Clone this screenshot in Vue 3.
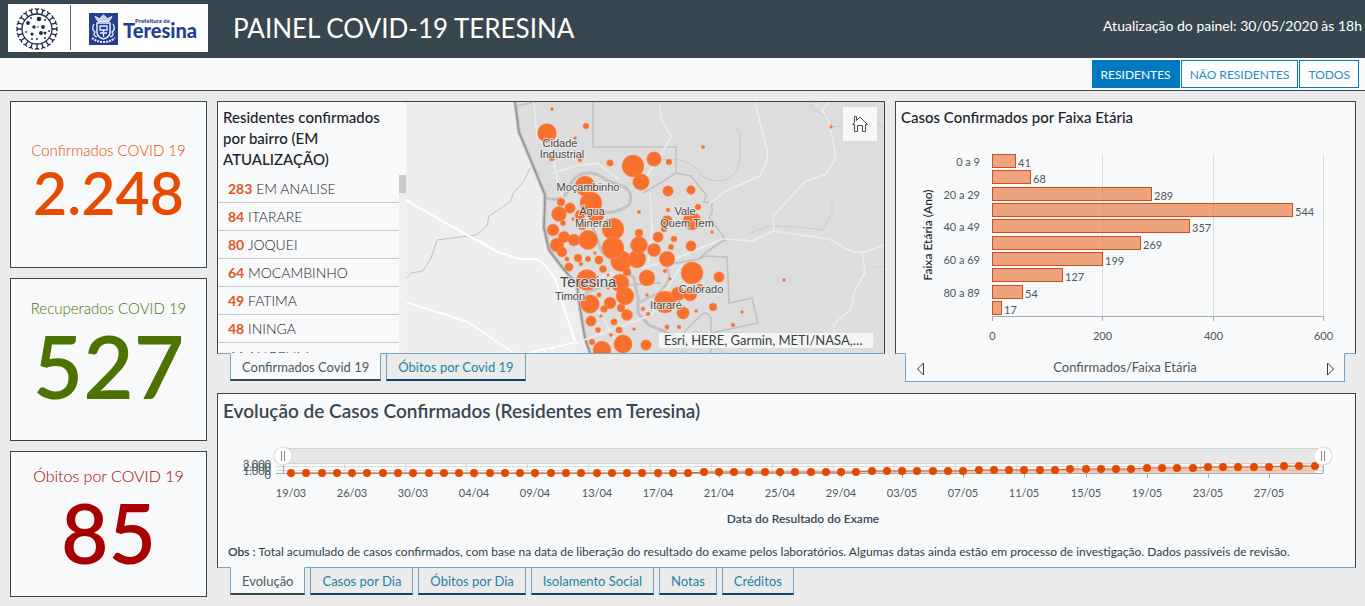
<script setup>
import { ref } from 'vue'

const filters = ['RESIDENTES', 'NÃO RESIDENTES', 'TODOS']
const activeFilter = ref('RESIDENTES')

const indicators = [
  { label: 'Confirmados COVID 19', value: '2.248', kind: 'confirmed' },
  { label: 'Recuperados COVID 19', value: '527', kind: 'recovered' },
  { label: 'Óbitos por COVID 19', value: '85', kind: 'deaths' },
]

const districts = [
  [283, 'EM ANALISE'],
  [84, 'ITARARE'],
  [80, 'JOQUEI'],
  [64, 'MOCAMBINHO'],
  [49, 'FATIMA'],
  [48, 'ININGA'],
  [46, 'ANGELIM'],
]

const mapTabs = ['Confirmados Covid 19', 'Óbitos por Covid 19']
const activeMapTab = ref(mapTabs[0])

const chartTabs = ['Evolução', 'Casos por Dia', 'Óbitos por Dia', 'Isolamento Social', 'Notas', 'Créditos']
const activeChartTab = ref(chartTabs[0])

// x, y, radius
const bubbles = [
  [552, 109, 1.5], [547, 133, 9.5], [586, 126, 3], [575, 138, 1.5], [552, 158, 3], [580, 160, 2],
  [610, 163, 3.3], [633, 166, 11], [641, 182, 8.3], [585, 186, 10], [596, 215, 8], [591, 203, 11],
  [561, 202, 4], [570, 208, 5.3], [559, 214, 7.5], [563, 223, 2.7], [573, 219, 1.5], [639, 212, 1.7],
  [580, 215, 5], [582, 226, 4], [553, 230, 6], [613, 229, 11], [654, 159, 7.3], [669, 162, 3],
  [703, 147, 1.8], [831, 127, 1.4], [668, 191, 5.3], [691, 190, 4.4], [668, 210, 2], [698, 207, 3],
  [667, 221, 5.5], [692, 221, 9], [664, 229, 3], [712, 232, 1.5], [557, 245, 7], [564, 237, 5.8],
  [574, 240, 6], [588, 240, 9.7], [562, 252, 5], [567, 259, 2.3], [578, 258, 4], [588, 259, 2.8],
  [581, 264, 2], [569, 267, 4.2], [599, 260, 4.2], [595, 253, 1.6], [603, 269, 3.6], [621, 261, 10.5],
  [613, 248, 11], [637, 259, 9], [639, 245, 8.5], [639, 233, 4], [587, 280, 10.5], [620, 283, 9],
  [627, 272, 4], [608, 275, 1.4], [608, 288, 1.4], [647, 278, 8], [625, 296, 9], [599, 295, 2.3],
  [590, 304, 9.3], [610, 303, 6], [604, 309, 3.5], [621, 308, 4], [627, 315, 5.6], [601, 316, 1.5],
  [591, 321, 5.2], [614, 322, 3.2], [598, 330, 2.7], [619, 330, 3.3], [611, 335, 1.8], [634, 329, 1.6],
  [592, 342, 2.9], [623, 344, 9.2], [602, 350, 9], [646, 345, 5.3], [643, 309, 2], [647, 295, 1.5],
  [648, 314, 2], [658, 237, 5.2], [674, 239, 3], [671, 247, 2.8], [654, 250, 6.6], [691, 246, 5.2],
  [667, 259, 7.8], [665, 271, 1.9], [670, 279, 1.4], [692, 273, 11], [719, 277, 5.3], [784, 280, 1.5],
  [700, 287, 3], [665, 302, 11], [678, 294, 7], [690, 294, 7], [683, 313, 6.2], [696, 311, 1.6],
  [713, 307, 3.9], [742, 312, 1.5], [733, 325, 2], [667, 327, 2.3], [679, 327, 2],
]

const places = [
  [560, 147, 'Cidade'], [562, 158, 'Industrial'], [588, 191, 'Moçambinho'], [592, 215, 'Água'],
  [593, 227, 'Mineral'], [685, 215, 'Vale'], [687, 227, 'Quem Tem'], [701, 293, 'Colorado'],
  [666, 309, 'Itararé'], [570, 300, 'Timon'],
]

const ages = [41, 68, 289, 544, 357, 269, 199, 127, 54, 17].map((value, i) => ({
  value,
  y: [154, 170, 187, 203, 219, 236, 252, 268, 285, 301][i],
  width: Math.round((value * 331) / 600),
  label: ['0 a 9', '', '20 a 29', '', '40 a 49', '', '60 a 69', '', '80 a 89', ''][i],
}))
const ageTicks = [0, 200, 400, 600].map((value) => ({ value, x: 992.5 + Math.round((value * 331) / 600) }))

// day index at which the curve climbs one more pixel
const climbs = [27, 38, 45, 51, 56, 60, 65]
const points = Array.from({ length: 68 }, (_, i) => ({
  x: Math.round(291 + i * 15.28),
  y: 473 - climbs.filter((c) => i >= c).length,
}))
const curve = points.map((p) => `${p.x},${p.y}`).join(' ')
const dates = [
  '19/03', '26/03', '30/03', '04/04', '09/04', '13/04', '17/04', '21/04', '25/04',
  '29/04', '03/05', '07/05', '11/05', '15/05', '19/05', '23/05', '27/05',
].map((label, i) => ({ label, x: Math.round(291 + i * 61.12) }))

const spikes = Array.from({ length: 20 }, (_, i) => i * 18)
</script>

<template>
  <div class="page">
    <header class="header">
      <svg class="logo" viewBox="0 0 200 48" role="img" aria-label="Prefeitura de Teresina">
        <rect width="200" height="48" fill="#fff" />
        <g transform="translate(29 25)" stroke="#1d2947" fill="none">
          <circle r="15" stroke-width="1.3" />
          <g v-for="a in spikes" :key="a" :transform="`rotate(${a})`">
            <path d="M0-15V-20M-2-20.5Q0-18.5 2-20.5" stroke-width="1.3" />
          </g>
          <g fill="#1d2947" stroke="none">
            <circle cx="2" cy="-10" r="2.3" /><circle cx="-9" cy="-6" r="1.9" /><circle cx="-3" cy="-2" r="1.7" />
            <circle cx="6" cy="-2" r="1.9" /><circle cx="4" cy="4" r="2" /><circle cx="-5" cy="5" r="1.6" />
            <circle cx="8" cy="4" r="1.5" /><circle cx="-6" cy="-11" r=".9" /><circle cx="8" cy="-9" r="1" />
            <circle cx="0" cy="10" r="1" /><circle cx="-5" cy="10" r=".9" /><circle cx="12" cy="2" r=".9" />
            <circle cx="-11" cy="3" r=".9" /><circle cx="8" cy="9" r="1" /><circle cx="1" cy="-2" r=".8" />
          </g>
        </g>
        <path d="M62.5 1V46" stroke="#5a6488" />
        <rect x="81" y="9" width="29" height="32" fill="#243f8f" />
        <g fill="none" stroke="#e9edf7">
          <path d="M87 12.500l3 5h11l3-5-4.500 2-4-3.500-4 3.500z" fill="#c4cde6" />
          <path d="M89 19h13v9q0 5-6.500 7Q89 33 89 28z" stroke-width="1.500" />
          <path d="M92 22h7v4h-7zM95.500 26v7M92 29h7M86 20q-3 5 1 8-3 3 2 5M105 20q3 5-1 8 3 3-2 5" stroke-width="1.300" />
          <path d="M84 34q5 4 11.500 4T107 34" stroke-width="2" stroke-dasharray="2 1" />
        </g>
        <text x="127" y="19" class="logo-small">Prefeitura de</text>
        <text x="115" y="34" class="logo-name">Teresina</text>
      </svg>
      <h1>PAINEL COVID-19 TERESINA</h1>
      <p class="updated">Atualização do painel: 30/05/2020 às 18h</p>
    </header>

    <nav class="filters" aria-label="Filtro de residência">
      <button
        v-for="f in filters"
        :key="f"
        type="button"
        :class="{ active: f === activeFilter }"
        :aria-pressed="f === activeFilter"
        @click="activeFilter = f"
      >{{ f }}</button>
    </nav>

    <main class="dashboard">
      <aside class="indicators">
        <section v-for="n in indicators" :key="n.kind" class="indicator" :class="n.kind">
          <h2>{{ n.label }}</h2>
          <p>{{ n.value }}</p>
        </section>
      </aside>

      <div class="content">
        <div class="top-row">
          <section class="block map-block">
            <div class="panel map-panel">
              <div class="districts">
                <h2>Residentes confirmados por bairro (EM ATUALIZAÇÃO)</h2>
                <div class="scroller">
                  <ul>
                    <li v-for="[count, name] in districts" :key="name"><strong>{{ count }}</strong> {{ name }}</li>
                  </ul>
                  <div class="track"><div class="thumb"></div></div>
                </div>
              </div>
              <div class="map">
                <svg class="map-canvas" viewBox="406 102 478 251" preserveAspectRatio="xMidYMid slice" role="img" aria-label="Mapa de casos confirmados por bairro">
                  <rect x="406" y="102" width="478" height="251" fill="#eeeeee" />
                  <path d="M515 102L519 132 532 163 545 195 544 228 549 250 562 267 577 285 580 308 585 338 590 353H884V102z" fill="#dddddd" />
                  <path d="M515 102L519 132 532 163 545 195 544 228 549 250 562 267 577 285 580 308 585 338 590 353" fill="none" stroke="#c8c8c8" stroke-width="4" />
                  <path d="M515 102L519 132 532 163 545 195 544 228 549 250 562 267 577 285 580 308 585 338 590 353" fill="none" stroke="#929292" stroke-width="1.500" />
                  <g fill="none" stroke="#c2c2c2">
                    <path d="M516 106L536 102M593 102V147H676V174M676 173L662 182 650 189 643 193M676 173L691 176 706 195 704 202 712 203 712 213 709 217 723 236 726 241" stroke-width="1.500" />
                    <path d="M726 239Q708 250 699 259L666 265Q675 280 658 293L640 302" stroke-width="2" />
                    <path d="M699 259L706 256 727 257 729 303 752 298 758 323 711 333M711 353V318Q707 309 699 317L684 332" stroke-width="1.500" />
                    <path d="M546 198Q563 203 569 189 573 174 587 173 597 172 606 180L625 187Q634 194 629 205 614 215 597 212" stroke-width="3" />
                    <path d="M592 225L602 252 624 269 634 278 638 298 638 313 649 325 677 337" stroke-width="3" />
                    <path d="M584 294L602 287 627 285 661 283" stroke-width="2" />
                    <path d="M530 168L524 181 514 192 510 202 489 216 487 226 476 235 437 240 431 258 423 271 411 273 407 278" />
                    <path d="M663 160Q690 156 702 176 712 183 726 180 739 175 740 157L740 132 737 128M811 102V107L827 117 833 127 841 126 846 113M878 122L884 130M746 235L768 226 800 227 823 230 832 212V203M874 267H884M681 353L695 330 724 353" stroke="#cbcbcb" />
                  </g>
                  <g fill="none" stroke="#fff">
                    <path d="M406 200L449 225 498 252 520 259H537Q556 272 559 293L575 341" stroke-width="2" />
                    <path d="M406 302L468 322 514 353M528 353L582 341M545 353V349M552 353V347" stroke-width="1.500" />
                    <path d="M534 102L537 138 552 152 558 182 564 203M553 173L576 166 597 163 620 180M659 102L661 119 671 136 661 155 647 176M650 193L652 230 648 264M755 102L760 123 767 150V161L760 176 724 192 709 204M830 102L822 110 829 121 833 140 836 158 826 174 805 182 773 216 774 231" stroke="#ededed" stroke-width="1.500" />
                    <path d="M724 239L753 241 773 231 829 239 852 252H866L884 245M862 252L865 272 854 293 851 309 834 324 834 334M578 342L652 315 682 264M641 268L672 260 722 239M590 303L602 316 622 353M582 282L612 273" stroke="#ededed" stroke-width="1.500" />
                  </g>
                  <g fill="#f96f2c" stroke="#fa9562" stroke-width=".5">
                    <circle v-for="([x, y, r], i) in bubbles" :key="i" :cx="x" :cy="y" :r="r" />
                  </g>
                  <g class="place">
                    <text v-for="[x, y, name] in places" :key="name" :x="x" :y="y">{{ name }}</text>
                    <text x="588" y="287" class="city">Teresina</text>
                  </g>
                </svg>
                <button type="button" class="home" aria-label="Visão inicial">
                  <svg viewBox="0 0 16 16" width="16" height="16" fill="none" stroke="#4c4c4c">
                    <path d="M.5 8.500L2.500 6.500V.500H4.500V4.500L8 1 15.500 8.500H13.500V15.500H10.500V9.500H5.500V15.500H2.500V8.500z" />
                  </svg>
                </button>
                <p class="credits">Esri, HERE, Garmin, METI/NASA,…</p>
              </div>
            </div>
            <div class="tabs" role="tablist">
              <button
                v-for="t in mapTabs"
                :key="t"
                type="button"
                role="tab"
                :aria-selected="t === activeMapTab"
                :class="{ active: t === activeMapTab }"
                @click="activeMapTab = t"
              >{{ t }}</button>
            </div>
          </section>

          <section class="block age-block">
            <div class="panel">
              <h2>Casos Confirmados por Faixa Etária</h2>
              <svg class="chart" viewBox="896 133 459 220" role="img" aria-label="Casos confirmados por faixa etária">
                <path v-for="t in ageTicks.slice(1)" :key="t.value" :d="`M${t.x} 154V316`" stroke="#dadde0" />
                <g v-for="b in ages" :key="b.y">
                  <rect x="992.500" :y="b.y + 0.5" :width="b.width" height="13" class="bar" />
                  <text :x="995 + b.width" :y="b.y + 13">{{ b.value }}</text>
                  <text x="980" :y="b.y + 12" text-anchor="end">{{ b.label }}</text>
                </g>
                <path d="M992 316.500H1324" stroke="#a5acb1" />
                <g v-for="t in ageTicks" :key="t.value">
                  <path :d="`M${t.x} 316V321`" stroke="#a5acb1" />
                  <text :x="t.x" y="340" text-anchor="middle">{{ t.value }}</text>
                </g>
                <text transform="translate(932 235) rotate(-90)" text-anchor="middle" class="axis-title">Faixa Etária (Ano)</text>
              </svg>
            </div>
            <div class="pager">
              <button type="button" aria-label="Anterior">
                <svg viewBox="0 0 9 14" width="9" height="14" fill="none" stroke="#323f47"><path d="M7.500 1V13L1.500 7z" /></svg>
              </button>
              <span>Confirmados/Faixa Etária</span>
              <button type="button" aria-label="Próximo">
                <svg viewBox="0 0 9 14" width="9" height="14" fill="none" stroke="#323f47"><path d="M1.500 1V13L7.500 7z" /></svg>
              </button>
            </div>
          </section>
        </div>

        <section class="block evolution-block">
          <div class="panel">
            <h2>Evolução de Casos Confirmados (Residentes em Teresina)</h2>
            <svg class="chart" viewBox="218 428 1137 109" role="img" aria-label="Evolução de casos confirmados">
              <rect x="283" y="448.500" width="1040" height="15" fill="#e6e7e8" stroke="#d2d5d7" />
              <path d="M276 466.500H1323M276 470.500H1323" stroke="#d9dcde" />
              <path v-for="d in dates" :key="d.x" :d="`M${d.x + 53.5} 464V473`" stroke="#d9dcde" />
              <path v-for="d in dates" :key="d.label" :d="`M${d.x + 0.5} 473V478`" stroke="#a5acb1" />
              <path d="M276 473.500H1323M283.500 465V473M1323.500 465V473" stroke="#a5acb1" fill="none" />
              <polygon :points="`291,473 ${curve} 1315,473`" fill="#e64c00" fill-opacity=".25" />
              <polyline :points="curve" fill="none" stroke="#d9571c" stroke-width="1" />
              <circle v-for="p in points" :key="p.x" :cx="p.x" :cy="p.y" r="4" fill="#e34a00" />
              <g v-for="x in [283, 1323]" :key="x">
                <circle :cx="x" cy="456" r="9.500" fill="#dadcde" />
                <circle :cx="x" cy="456" r="8.500" fill="#fff" />
                <path :d="`M${x - 1.5} 451V461M${x + 1.5} 451V461`" stroke="#888" />
              </g>
              <g text-anchor="end">
                <text x="271" y="468">3.000</text>
                <text x="271" y="471">2.000</text>
                <text x="271" y="475">1.000</text>
                <text x="271" y="479">0</text>
              </g>
              <text v-for="d in dates" :key="d.label" :x="d.x" y="497" text-anchor="middle">{{ d.label }}</text>
              <text x="803" y="523" text-anchor="middle" class="exam-title">Data do Resultado do Exame</text>
            </svg>
            <p class="note"><strong>Obs :</strong> Total acumulado de casos confirmados, com base na data de liberação do resultado do exame pelos laboratórios. Algumas datas ainda estão em processo de investigação. Dados passíveis de revisão.</p>
          </div>
          <div class="tabs" role="tablist">
            <button
              v-for="t in chartTabs"
              :key="t"
              type="button"
              role="tab"
              :aria-selected="t === activeChartTab"
              :class="{ active: t === activeChartTab }"
              @click="activeChartTab = t"
            >{{ t }}</button>
          </div>
        </section>
      </div>
    </main>
  </div>
</template>

<style>
body {
  background: #ebebeb;
}
</style>

<style scoped>
* {
  box-sizing: border-box;
}
h1,
h2,
p,
ul {
  margin: 0;
  padding: 0;
}
.page {
  display: flex;
  flex-direction: column;
  min-height: 100vh;
  background: #ebebeb;
  color: #323f47;
  font-family: Lato, "Open Sans", sans-serif;
  font-size: 13px;
}
button {
  font: inherit;
  cursor: pointer;
}
.header {
  display: flex;
  align-items: center;
  min-height: 58px;
  padding: 0 3px 2px 8px;
  background: #38464f;
  color: #fff;
}
.logo {
  width: 200px;
  height: 48px;
}
.logo-small {
  font: 900 6px Lato, sans-serif;
  fill: #243f8f;
}
.logo-name {
  font: 900 20px Lato, sans-serif;
  fill: #243f8f;
}
.header h1 {
  margin-left: 25px;
  font-size: 26px;
  font-weight: 400;
}
.updated {
  margin-left: auto;
  padding-bottom: 5px;
  font-size: 14px;
}
.filters {
  display: flex;
  justify-content: flex-end;
  gap: 1px;
  padding: 2px 6px;
  height: 33px;
  background: #f7f9fb;
  border-bottom: 1px solid #38464f;
}
.filters button {
  height: 28px;
  padding: 0 8px;
  border: 1px solid #0079c1;
  background: #fff;
  color: #2c8bc6;
  font-size: 12px;
}
.filters .active {
  background: #0079c1;
  color: #fff;
}
.dashboard {
  flex: 1;
  display: flex;
  gap: 10px;
  padding: 10px 9px 9px 10px;
}
.indicators {
  flex: 0 0 197px;
  display: grid;
  grid-template-rows: 167fr 163fr 146fr;
  gap: 10px;
}
.indicator {
  display: flex;
  flex-direction: column;
  align-items: center;
  background: #f7f9fb;
  border: 1px solid #38464f;
}
.indicator h2 {
  font-size: 15px;
  line-height: 20px;
  font-weight: 300;
}
.indicator p {
  font-weight: 600;
}
.confirmed {
  padding-top: 38px;
  color: #e64c00;
}
.confirmed p {
  font-size: 59px;
  line-height: 66px;
}
.recovered {
  padding-top: 19px;
  color: #4c7300;
}
.recovered p {
  font-size: 87px;
  line-height: 96px;
}
.deaths {
  padding-top: 14px;
  color: #a80000;
}
.deaths h2 {
  font-size: 16px;
}
.deaths p {
  font-size: 82px;
  line-height: 92px;
}
.content {
  flex: 1;
  min-width: 0;
  display: grid;
  grid-template-rows: 281fr 202fr;
  gap: 11px;
  padding-bottom: 2px;
}
.top-row {
  display: grid;
  grid-template-columns: 668fr 461fr;
  gap: 10px;
  min-height: 0;
}
.block {
  display: flex;
  flex-direction: column;
  min-width: 0;
  min-height: 0;
}
.map-block {
  padding-bottom: 1px;
}
.panel {
  flex: 1;
  display: flex;
  flex-direction: column;
  min-height: 0;
  background: #f7f9fb;
  border: 1px solid #38464f;
  border-bottom-color: #6fa5c8;
}
.panel h2 {
  padding: 5px;
  font-size: 15px;
  line-height: 21px;
  font-weight: 500;
  color: #1c2327;
}
.map-panel {
  flex-direction: row;
}
.districts {
  flex: 0 0 188px;
  display: flex;
  flex-direction: column;
  min-height: 0;
}
.scroller {
  flex: 1 1 0;
  display: flex;
  min-height: 0;
  overflow: hidden;
}
.scroller ul {
  flex: 1;
  list-style: none;
}
.scroller li {
  height: 28px;
  padding-left: 10px;
  border-bottom: 1px solid #cacaca;
  font-size: 14px;
  line-height: 28px;
  font-weight: 300;
  color: #1c2327;
}
.scroller strong {
  font-weight: 700;
  color: #e0561a;
}
.track {
  width: 7px;
  background: #efefef;
}
.thumb {
  height: 18px;
  background: #c9c9c9;
}
.map {
  position: relative;
  flex: 1;
  min-width: 0;
  overflow: hidden;
}
.map-canvas {
  position: absolute;
  inset: 0;
  width: 100%;
  height: 100%;
}
.place text {
  font: 11px "Liberation Sans", sans-serif;
  text-anchor: middle;
  fill: #4a4a4a;
  stroke: #eeeeee;
  stroke-opacity: 0.8;
  stroke-width: 2px;
  paint-order: stroke;
}
.place .city {
  font-size: 15px;
}
.home {
  position: absolute;
  top: 5px;
  right: 7px;
  display: grid;
  place-items: center;
  width: 34px;
  height: 34px;
  padding: 0;
  border: 0;
  background: #f7f8f9;
}
.credits {
  position: absolute;
  right: 11px;
  bottom: 5px;
  width: 214px;
  padding: 0 5px;
  white-space: nowrap;
  background: rgba(255, 255, 255, 0.7);
  line-height: 15px;
}
.tabs {
  display: flex;
  gap: 5px;
  margin-top: -1px;
  padding-left: 13px;
}
.tabs button {
  height: 28px;
  padding: 0 11px;
  border: 1px solid #6fa5c8;
  border-bottom: 2px solid #0e4767;
  background: #ebebeb;
  color: #1a83a8;
}
.tabs .active {
  background: #f7f9fb;
  border-top-color: #f7f9fb;
  border-bottom-color: #38464f;
  color: #4c5860;
}
.chart {
  flex: 1 1 0;
  width: 100%;
  min-height: 0;
}
.chart text {
  font-size: 11px;
  fill: #4c5860;
}
.chart .bar {
  fill: #e64c00;
  fill-opacity: 0.5;
  stroke: #cf5018;
}
.chart .axis-title {
  font-size: 12px;
  font-weight: 500;
  fill: #1c2327;
}
.chart .exam-title {
  font-size: 12px;
  font-weight: 600;
  fill: #38464f;
}
.pager {
  display: flex;
  align-items: center;
  justify-content: space-between;
  height: 29px;
  margin: -1px 11px 0 10px;
  padding: 0 6px 2px;
  background: #f7f9fb;
  border: 1px solid #6fa5c8;
  border-top-color: #f7f9fb;
  color: #4c5860;
}
.pager button {
  display: grid;
  place-items: end center;
  width: 16px;
  height: 18px;
  padding: 0;
  border: 0;
  background: none;
}
.evolution-block h2 {
  font-size: 19px;
  line-height: 24px;
  font-weight: 600;
  color: #38464f;
}
.note {
  padding: 6px 0 6px 10px;
  font-size: 12px;
  line-height: 18px;
}
.note strong {
  font-weight: 600;
}
</style>
